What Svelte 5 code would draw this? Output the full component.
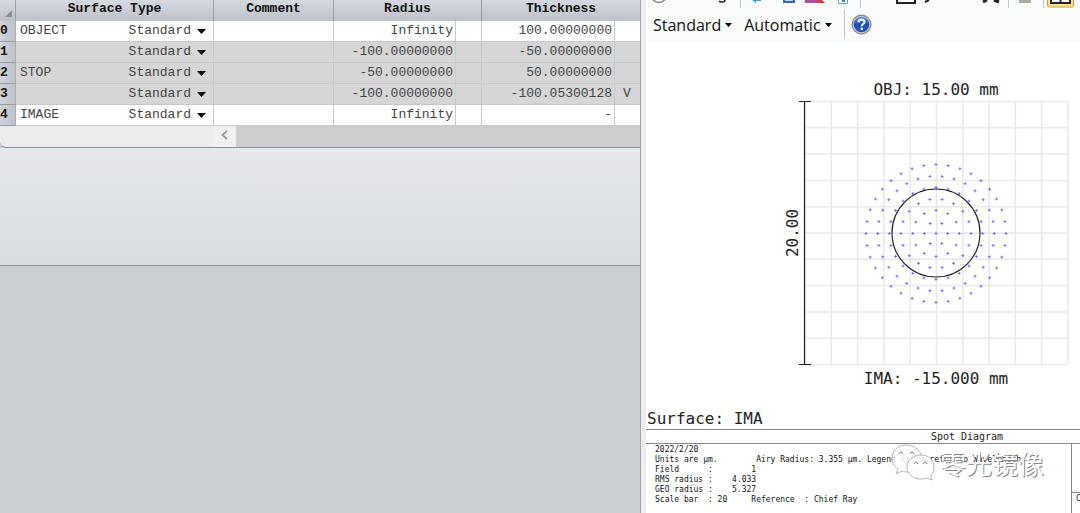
<script>
  const rows = [
    { n: 0, label: 'OBJECT', radius: 'Infinity', thickness: '100.00000000', flag: '' },
    { n: 1, label: '', radius: '-100.00000000', thickness: '-50.00000000', flag: '', shaded: true },
    { n: 2, label: 'STOP', radius: '-50.00000000', thickness: '50.00000000', flag: '', shaded: true },
    { n: 3, label: '', radius: '-100.00000000', thickness: '-100.05300128', flag: 'V', shaded: true },
    { n: 4, label: 'IMAGE', radius: 'Infinity', thickness: '-', flag: '' }
  ];

  // Hexapolar ray pattern: ring k carries 6k rays.
  const rays = [{ x: 0, y: 0 }];
  for (let k = 1; k <= 6; k++) {
    for (let i = 0; i < 6 * k; i++) {
      const a = (i * Math.PI) / (3 * k);
      const r = (k * 70) / 6;
      rays.push({ x: r * Math.cos(a), y: r * Math.sin(a) * 0.985 });
    }
  }
  const spots = rays
    .map((p) => `M${(p.x + 149.5).toFixed(1)} ${(p.y + 153.5).toFixed(1)}h3m-1.5 -1.5v3`)
    .join('');
  const steps = Array.from({ length: 11 }, (_, i) => i);

  const report = `2022/2/20
Units are µm.        Airy Radius: 3.355 µm. Legend items refer to Wavelengths
Field      :        1
RMS radius :    4.033
GEO radius :    5.327
Scale bar  : 20     Reference  : Chief Ray`;
</script>

<div class="app">
  <section class="editor">
    <div class="sheet">
      <table>
        <colgroup>
          <col class="c-num" /><col class="c-type" /><col class="c-comment" /><col class="c-radius" />
          <col class="c-flag" /><col class="c-thick" /><col class="c-last" />
        </colgroup>
        <thead>
          <tr>
            <th class="corner" aria-label="Select all"><svg width="7" height="7"><path d="M7 0v7H0z" fill="#8b8e94" /></svg></th>
            <th>Surface Type</th>
            <th>Comment</th>
            <th colspan="2">Radius</th>
            <th colspan="2">Thickness</th>
          </tr>
        </thead>
        <tbody>
          {#each rows as row}
            <tr class:shaded={row.shaded}>
              <th scope="row">{row.n}</th>
              <td>
                <div class="type">
                  <span>{row.label}</span>
                  <button aria-label="Surface type {row.n}">Standard<svg width="9" height="5"><path d="M0 0h9L4.500 5z" /></svg></button>
                </div>
              </td>
              <td></td>
              <td class="num">{row.radius}</td>
              <td></td>
              <td class="num">{row.thickness}</td>
              <td class="flag">{row.flag}</td>
            </tr>
          {/each}
        </tbody>
      </table>
      <div class="scroll">
        <button aria-label="Scroll left"><svg width="7" height="10"><path d="M6 1L1.500 5L6 9" fill="none" stroke="#9a9a9a" stroke-width="1.800" /></svg></button>
        <div class="thumb"></div>
      </div>
    </div>
    <div class="band"></div>
  </section>

  <section class="viewer">
    <div class="tools">
      <svg class="strip" width="434" height="9" aria-hidden="true">
        <circle cx="13" cy="-5" r="7.500" fill="none" stroke="#858585" stroke-width="1.500" />
        <path d="M79 0q0 2-3 2q-2 0-3-1" fill="none" stroke="#222" stroke-width="1.500" />
        <path d="M94.500 0v8M214.500 0v8M362.500 0v8M397.500 0v8" stroke="#b5c8dc" />
        <path d="M106 0h9v1h-5v2z" fill="#3aa0dd" />
        <path d="M137 0h12v3h-12z" fill="#3763a8" /><path d="M139 0h8v1h-8z" fill="#b9d2ef" />
        <path d="M159 0h17l3 3h-20z" fill="#b04c9b" /><path d="M170 0h5l4 3h-5z" fill="#d83b32" />
        <path d="M192.500 0v3.500h9V0" fill="#fff" stroke="#8398ad" /><path d="M196 0h3v2h-3z" fill="#168ac4" />
        <path d="M251 0v3h18V0" fill="#fff" stroke="#222" stroke-width="2" />
        <path d="M283 0l-4 2" stroke="#222" stroke-width="2" />
        <path d="M341 0l-4 2M348 0l5 2" stroke="#222" stroke-width="3" />
        <path d="M373 0h12v3h-12z" fill="#aaa9a1" />
        <rect x="401.500" y="-10" width="26" height="17" rx="2" fill="#ffe38a" stroke="#d39b2f" />
        <path d="M405 0v3h19V0M414.500 0v3" fill="#fff" stroke="#222" stroke-width="2" />
      </svg>
      <div class="menus">
        <button>Standard<svg width="7" height="4"><path d="M0 0h7L3.500 4z" /></svg></button>
        <button>Automatic<svg width="7" height="4"><path d="M0 0h7L3.500 4z" /></svg></button>
        <button class="help" aria-label="Help">
          <svg width="21" height="21" viewBox="0 0 21 21">
            <defs><linearGradient id="hb" x2="0" y2="1"><stop stop-color="#6d92df" /><stop offset=".5" stop-color="#204db5" /><stop offset="1" stop-color="#2a55b8" /></linearGradient></defs>
            <circle cx="10.500" cy="10.500" r="10" fill="#858891" />
            <circle cx="10.500" cy="10.500" r="8.800" fill="#c9ccd3" />
            <circle cx="10.500" cy="10.500" r="7.800" fill="url(#hb)" />
            <path d="M7.500 8.300Q7.600 5.500 10.600 5.500Q13.500 5.600 13.400 8Q13.300 9.400 11.800 10.200Q10.800 10.900 10.800 12.200" fill="none" stroke="#fff" stroke-width="2" />
            <circle cx="10.800" cy="14.800" r="1.300" fill="#fff" />
          </svg>
        </button>
      </div>
    </div>

    <div class="plot">
      <svg viewBox="-10 0 305 324" width="305" height="324" role="img" aria-label="Spot diagram">
        <g stroke="#e9e9e9" stroke-width="1.500">
          {#each steps as s}
            <path d="M{20 + s * 26.3} 21.500V284.500M20 {21.5 + s * 26.3}H283" />
          {/each}
        </g>
        <path d="M14 21.500h12M19.500 21.500v263M14 284.500h12" fill="none" stroke="#222" stroke-width="1.200" />
        <path d={spots} fill="none" stroke="#4a4aff" stroke-width="1" opacity=".7" />
        <circle cx="151" cy="153" r="44" fill="none" stroke="#222" stroke-width="1.200" />
        <text x="151" y="15" text-anchor="middle">OBJ: 15.00 mm</text>
        <text x="151" y="304" text-anchor="middle">IMA: -15.000 mm</text>
        <text transform="translate(13 153) rotate(-90)" text-anchor="middle">20.00</text>
      </svg>
    </div>

    <div class="surface">Surface: IMA</div>
    <div class="title">Spot Diagram</div>
    <div class="info">
      <pre>{report}</pre>
      <div class="side"><span></span><span>C</span></div>
      <div class="mark">
        <svg width="44" height="38" viewBox="0 0 44 38">
          <g fill="#fff" fill-opacity=".85" stroke="#b4b4b4" stroke-width="1">
            <path d="M15 1C7 1 1 7 1 14c0 5 2 8 6 11l-2 5 6-3c2 1 5 1 8 1 7-1 12-7 12-14S23 1 15 1z" />
            <path d="M30 11c-8 0-14 5-14 12s6 12 14 12c2 0 4 0 6-1l5 2-1-4c2-2 3-5 3-9 0-7-5-12-13-12z" />
          </g>
          <g fill="none" stroke="#777"><path d="M8 10q2-4 4 0M19 10q2-4 4 0M23 20q2-4 4 0M32 20q2-4 4 0" /></g>
        </svg>
        <span>零光镜像</span>
      </div>
    </div>
  </section>
</div>

<style>
  :global(body) { margin: 0; }
  .app {
    display: grid;
    grid-template-columns: minmax(0, 16fr) minmax(0, 11fr);
    height: 100vh;
    overflow: hidden;
  }
  button { border: 0; padding: 0; background: none; font: inherit; color: inherit; }

  .editor {
    background: #cbced3;
    font: 13px/20px "Liberation Mono", monospace;
    color: #444;
  }
  .sheet { border-bottom: 1px solid #7f93a8; border-bottom-left-radius: 6px; overflow: hidden; background: #ececec; }
  table { width: 100%; border-collapse: separate; border-spacing: 0; table-layout: fixed; }
  .c-num { width: 16px; }
  .c-type { width: 198px; }
  .c-comment { width: 120px; }
  .c-radius { width: 122px; }
  .c-flag { width: 26px; }
  .c-thick { width: 133px; }
  th, td { padding: 0; box-sizing: border-box; white-space: nowrap; }
  thead th {
    height: 21px;
    line-height: 17px;
    vertical-align: top;
    color: #111;
    background: linear-gradient(#d6d9df, #bdc0c7);
    border-right: 1px solid #9b9ea5;
  }
  thead th:last-child { border-right: 0; }
  thead .corner { vertical-align: bottom; text-align: right; line-height: 0; padding: 0 3px 4px 0; }
  tbody th {
    height: 21px;
    text-align: left;
    color: #111;
    background: linear-gradient(90deg, #d0d3d9, #bfc2c9);
    border-bottom: 1px solid #989ba2;
    border-right: 1px solid #a9acb2;
  }
  td { background: #fff; border-right: 1px solid #c8c8c8; border-bottom: 1px solid #c8c8c8; }
  td:last-child { border-right: 0; }
  .shaded td { background: #d6d6d6; }
  .type { display: flex; justify-content: space-between; padding: 0 7px 0 4px; }
  .type button { display: flex; align-items: center; gap: 6px; }
  .type svg { fill: #000; }
  .num { text-align: right; padding-right: 2px; }
  .flag { padding-left: 8px; }
  .scroll { display: flex; height: 21px; padding-left: 213px; }
  .scroll button { width: 23px; background: #f0f0f0; }
  .thumb { flex: 1; background: #cdcdcd; }
  .band {
    height: 117px;
    background: linear-gradient(#e6e8ec, #d8dce0);
    border-bottom: 1px solid #909398;
  }

  .viewer {
    display: flex;
    flex-direction: column;
    min-width: 0;
    border-left: 1px solid #a3a5a9;
    padding-left: 5px;
    background: linear-gradient(90deg, #eceef1 5px, #fff 5px);
    font-family: "DejaVu Sans Mono", monospace;
    color: #222;
  }
  .tools { height: 42px; background: #fafbfb; overflow: hidden; }
  .strip { display: block; }
  .menus { display: flex; align-items: center; gap: 12px; height: 31px; padding-left: 7px; font: 16px/22px "Open Sans", sans-serif; color: #111; }
  .menus button { display: flex; align-items: center; gap: 4px; }
  .menus .help { height: 29px; padding-left: 6px; border-left: 1px solid #b5c8dc; }
  .plot { flex: 1; display: flex; justify-content: flex-end; padding-top: 38px; }
  .plot svg { display: block; }
  .plot text { font: 16px "DejaVu Sans Mono", monospace; fill: #222; }
  .surface { font-size: 16px; line-height: 20px; padding-left: 1px; }
  .title { font-size: 10px; line-height: 13px; text-align: center; padding-left: 208px; border-top: 1px solid #888; border-bottom: 1px solid #888; }
  .info { position: relative; display: flex; justify-content: space-between; height: 69px; overflow: hidden; }
  pre { margin: 0; padding: 1px 0 0 9px; font: 8px/10px "DejaVu Sans Mono", monospace; color: #111; }
  .side { width: 8px; border-left: 1px solid #888; font-size: 8px; line-height: 12px; }
  .side span { display: block; padding-left: 4px; }
  .side span:first-child { height: 48px; border-bottom: 1px solid #888; }
  .mark { position: absolute; right: 36px; top: 0; display: flex; align-items: center; gap: 5px; }
  .mark span { font: 26px/38px "Noto Sans CJK SC", sans-serif; color: #fff; text-shadow: 1px 1px 0 #888; }
</style>
